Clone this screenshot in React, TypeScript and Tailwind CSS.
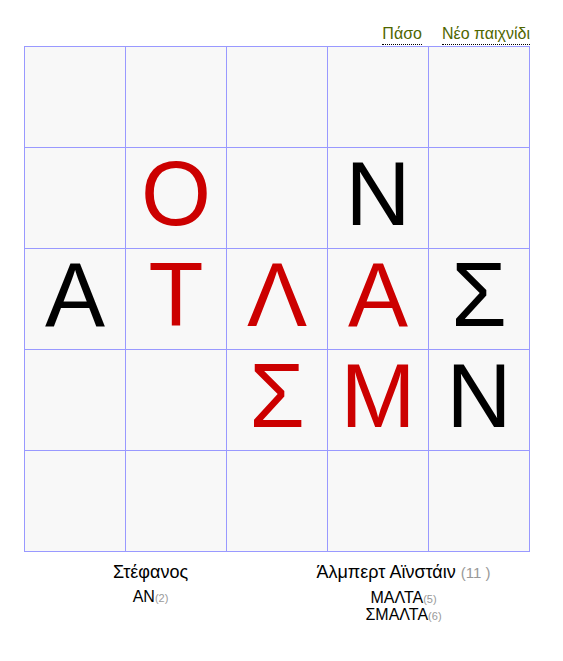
const board: [string, "r" | "b"][][] = [
  [["", "b"], ["", "b"], ["", "b"], ["", "b"], ["", "b"]],
  [["", "b"], ["Ο", "r"], ["", "b"], ["Ν", "b"], ["", "b"]],
  [["Α", "b"], ["Τ", "r"], ["Λ", "r"], ["Α", "r"], ["Σ", "b"]],
  [["", "b"], ["", "b"], ["Σ", "r"], ["Μ", "r"], ["Ν", "b"]],
  [["", "b"], ["", "b"], ["", "b"], ["", "b"], ["", "b"]],
];

const players = [
  { name: "Στέφανος", score: null as string | null, words: [["ΑΝ", 2]] },
  { name: "Άλμπερτ Αϊνστάιν", score: "(11 )", words: [["ΜΑΛΤΑ", 5], ["ΣΜΑΛΤΑ", 6]] },
];

export default function App() {
  return (
    <div className="min-h-[661px] bg-white font-['Liberation_Sans',Arial,sans-serif] text-black">
      <div className="ml-[24px] w-[506px] pt-[24px]">
        <div className="flex justify-end gap-[20px] text-[16px] leading-[20px] text-[#4f6600]">
          <a className="border-b border-dotted border-black">Πάσο</a>
          <a className="border-b border-dotted border-black">Νέο παιχνίδι</a>
        </div>
        <table className="mt-[1px] border-collapse">
          <tbody>
            {board.map((row, i) => (
              <tr key={i}>
                {row.map(([ch, c], j) => (
                  <td
                    key={j}
                    className={`h-[101px] w-[101px] border border-[#9999ff] bg-[#f8f8f8] p-0 text-center align-top text-[90px] leading-none ${c === "r" ? "text-[#cc0000]" : "text-black"}`}
                  >
                    <div className="pt-[1px]">{ch}</div>
                  </td>
                ))}
              </tr>
            ))}
          </tbody>
        </table>
        <div className="mt-[8px] grid grid-cols-2">
          {players.map((p) => (
            <div key={p.name} className="text-center">
              <div className="text-[18px] leading-[24px]">
                {p.name}
                {p.score && <span className="ml-[5px] text-[15px] text-[#999999]">{p.score}</span>}
              </div>
              <div className="mt-[5px] text-[16px] leading-[16px]">
                {p.words.map(([w, n]) => (
                  <div key={w as string}>
                    {w}
                    <span className="text-[11px] text-[#999999]">({n})</span>
                  </div>
                ))}
              </div>
            </div>
          ))}
        </div>
      </div>
    </div>
  );
}
